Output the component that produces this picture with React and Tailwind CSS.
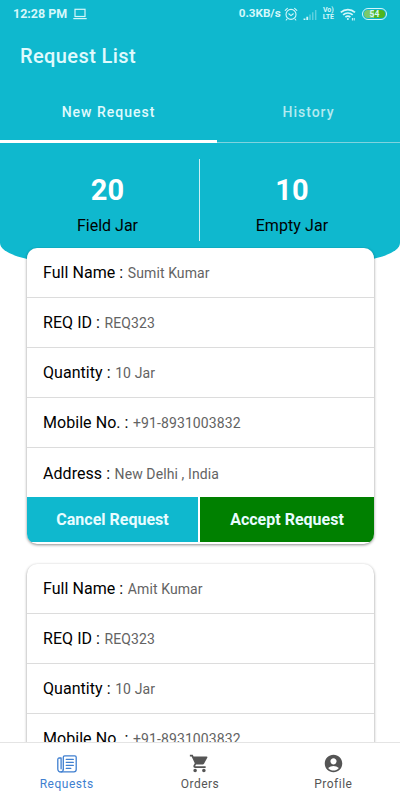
import React, { useState } from "react";
import { MdShoppingCart, MdAccountCircle } from "react-icons/md";

const requests = [
  {
    name: "Sumit Kumar",
    reqId: "REQ323",
    quantity: "10 Jar",
    mobile: "+91-8931003832",
    address: "New Delhi , India",
  },
  {
    name: "Amit Kumar",
    reqId: "REQ323",
    quantity: "10 Jar",
    mobile: "+91-8931003832",
    address: "New Delhi , India",
  },
];

function StatusBar() {
  return (
    <div className="flex h-7 items-center justify-between pl-[13px] pr-[13px] text-[#d5f7fa]">
      <div className="flex items-center">
        <span className="text-[12.5px] font-bold leading-none">12:28 PM</span>
        {/* laptop */}
        <svg
          viewBox="0 0 14 12"
          className="ml-[6px] h-3 w-[14px]"
          fill="none"
          stroke="currentColor"
          strokeWidth="1.2"
        >
          <rect x="2" y="1.3" width="10" height="7.2" />
          <path d="M.3 10.6h13.4" />
        </svg>
      </div>
      <div className="flex items-center">
        <span className="text-[11.7px] font-bold leading-none">0.3KB/s</span>
        {/* alarm */}
        <svg
          viewBox="0 0 14 14"
          className="ml-[3px] h-[14px] w-[14px]"
          fill="none"
          stroke="currentColor"
          strokeWidth="1.1"
          strokeLinecap="round"
        >
          <circle cx="7" cy="7.4" r="5" />
          <path d="M4.8 6.8 7 8.6 9.3 6.8M1.2 3.4 3.4 1.4M12.8 3.4 10.6 1.4M3 12l-.8 1M11 12l.8 1" />
        </svg>
        {/* signal */}
        <svg
          viewBox="0 0 16 12"
          className="ml-1 mt-px h-[11px] w-4"
          fill="currentColor"
        >
          <path d="M1 10.4h2V12H1zM4 8.5h2V12H4z" />
          <path
            opacity=".4"
            d="M7.2 6h1.6v6H7.2zM10.2 3.5h1.6V12h-1.6zM13.4 1H15v11h-1.6z"
          />
        </svg>
        <div className="ml-[5px] grid grid-rows-2 justify-items-center text-[7px] font-bold leading-[7px]">
          <span>Vo)</span>
          <span>LTE</span>
        </div>
        {/* wifi */}
        <svg
          viewBox="0 0 16 13"
          className="ml-[6px] h-[13px] w-4"
          fill="none"
          stroke="currentColor"
          strokeWidth="1.7"
        >
          <path d="M.8 4.4a10.4 10.4 0 0 1 14.2 0M3.1 6.9a7 7 0 0 1 9.6 0M5.4 9.2a3.7 3.7 0 0 1 5 0" />
          <circle cx="7.9" cy="11" r="1" fill="currentColor" stroke="none" />
          <path strokeWidth="1" d="M12.4 10v2.5M14.2 10v2.5" />
        </svg>
        <div className="ml-[6px] flex h-3 w-[25px] items-center justify-center rounded-full border border-[#d5f7fa] bg-linear-to-r from-[#7bc96a] from-50% to-[#4fb51e] to-50% bg-clip-content p-px text-[8.5px] font-bold leading-none">
          54
        </div>
      </div>
    </div>
  );
}

function NewspaperIcon({ className }) {
  return (
    <svg
      viewBox="0 0 20 18"
      className={className}
      fill="none"
      stroke="currentColor"
      strokeWidth="1.3"
      strokeLinejoin="round"
      strokeLinecap="round"
    >
      <path d="M6.3 14.4V2.3a1.4 1.4 0 0 1 1.4-1.4h10.1a1.4 1.4 0 0 1 1.4 1.4v12.3a2.3 2.3 0 0 1-2.3 2.3H4" />
      <path d="M6.3 14.4a2.5 2.5 0 0 1-2.6 2.5 2.8 2.8 0 0 1-2.9-2.7V4.4A1.4 1.4 0 0 1 2.2 3h1.9v10.8" />
      <path d="M9.3 4.4h7M9.3 7.4h7M9.3 10.4h7M9.3 13.4h4.5" />
    </svg>
  );
}

function Row({ label, value }) {
  return (
    <div className="flex h-[50px] items-center border-b border-[#dcdcdc] pl-4 pt-px last:border-b-0">
      <p className="text-[16px] leading-5 tracking-[0.05px] text-black">
        {label} :
        <span className="ml-[4.5px] text-[14px] tracking-[0.1px] text-[#636363]">
          {value}
        </span>
      </p>
    </div>
  );
}

function RequestCard({ request }) {
  return (
    <div className="mb-5 h-[296px] shrink-0 overflow-hidden rounded-[10px] bg-white shadow-[0_1px_3px_rgba(0,0,0,0.45)]">
      <div className="h-[249px]">
        <Row label="Full Name" value={request.name} />
        <Row label="REQ ID" value={request.reqId} />
        <Row label="Quantity" value={request.quantity} />
        <Row label="Mobile No." value={request.mobile} />
        <Row label="Address" value={request.address} />
      </div>
      <div className="flex h-[45px] gap-[2px] text-[16px] font-bold text-[#e8fcff]">
        <button className="w-[171px] bg-[#0fb8ce]">Cancel Request</button>
        <button className="flex-1 bg-[#008000]">Accept Request</button>
      </div>
    </div>
  );
}

function App() {
  const [activeTab, setActiveTab] = useState("new");

  return (
    <div className="flex h-[800px] w-[400px] flex-col overflow-hidden bg-white font-[Roboto,sans-serif]">
      <header className="h-[143px] shrink-0 bg-[#0fb8ce]">
        <StatusBar />
        <div className="flex h-[56px] items-center pl-5">
          <h1 className="text-[20px] font-medium tracking-[0.4px] text-[#e0fafd]">
            Request List
          </h1>
        </div>
        <div className="flex h-[59px] border-b border-[#7fd3df] text-[14px] font-medium tracking-[1px]">
          <button
            onClick={() => setActiveTab("new")}
            className={`-mb-px w-[217px] border-b-3 ${activeTab === "new" ? "border-white text-[#e0fafd]" : "border-transparent text-[#b4eaf0]"}`}
          >
            New Request
          </button>
          <button
            onClick={() => setActiveTab("history")}
            className={`-mb-px flex-1 border-b-3 ${activeTab === "history" ? "border-white text-[#e0fafd]" : "border-transparent text-[#b4eaf0]"}`}
          >
            History
          </button>
        </div>
      </header>

      <section className="flex h-[119px] shrink-0 rounded-b-[60px_19px] bg-[#0fb8ce] pt-4">
        <div className="flex h-[82px] w-[200px] flex-col items-center border-r border-[#c9eff4] pl-[16px] pt-[11px]">
          <span className="text-[29px] font-bold leading-10 text-white">20</span>
          <span className="text-[16px] leading-8 text-black">Field Jar</span>
        </div>
        <div className="flex h-[82px] w-[200px] flex-col items-center pr-[16px] pt-[11px]">
          <span className="text-[29px] font-bold leading-10 text-white">10</span>
          <span className="text-[16px] leading-8 tracking-[0.1px] text-black">
            Empty Jar
          </span>
        </div>
      </section>

      <main className="-mt-[15px] flex min-h-0 flex-1 flex-col overflow-hidden pl-[27px] pr-[26px] pt-px">
        {requests.map((request) => (
          <RequestCard key={request.name} request={request} />
        ))}
      </main>

      <nav className="grid h-[58px] shrink-0 grid-cols-3 border-t border-[#e4e4e4] bg-white text-[12px] tracking-[0.5px] text-[#555555]">
        <button className="flex flex-col items-center pt-[10px] text-[#3f7fd0]">
          <div className="flex h-[21px] items-center">
            <NewspaperIcon className="h-[18px] w-5" />
          </div>
          <span className="mt-[2px] leading-4">Requests</span>
        </button>
        <button className="flex flex-col items-center pt-[10px]">
          <MdShoppingCart className="h-[21px] w-[21px]" />
          <span className="mt-[2px] leading-4">Orders</span>
        </button>
        <button className="flex flex-col items-center pt-[10px]">
          <MdAccountCircle className="h-[21px] w-[21px]" />
          <span className="mt-[2px] leading-4">Profile</span>
        </button>
      </nav>
    </div>
  );
}

export default App;
